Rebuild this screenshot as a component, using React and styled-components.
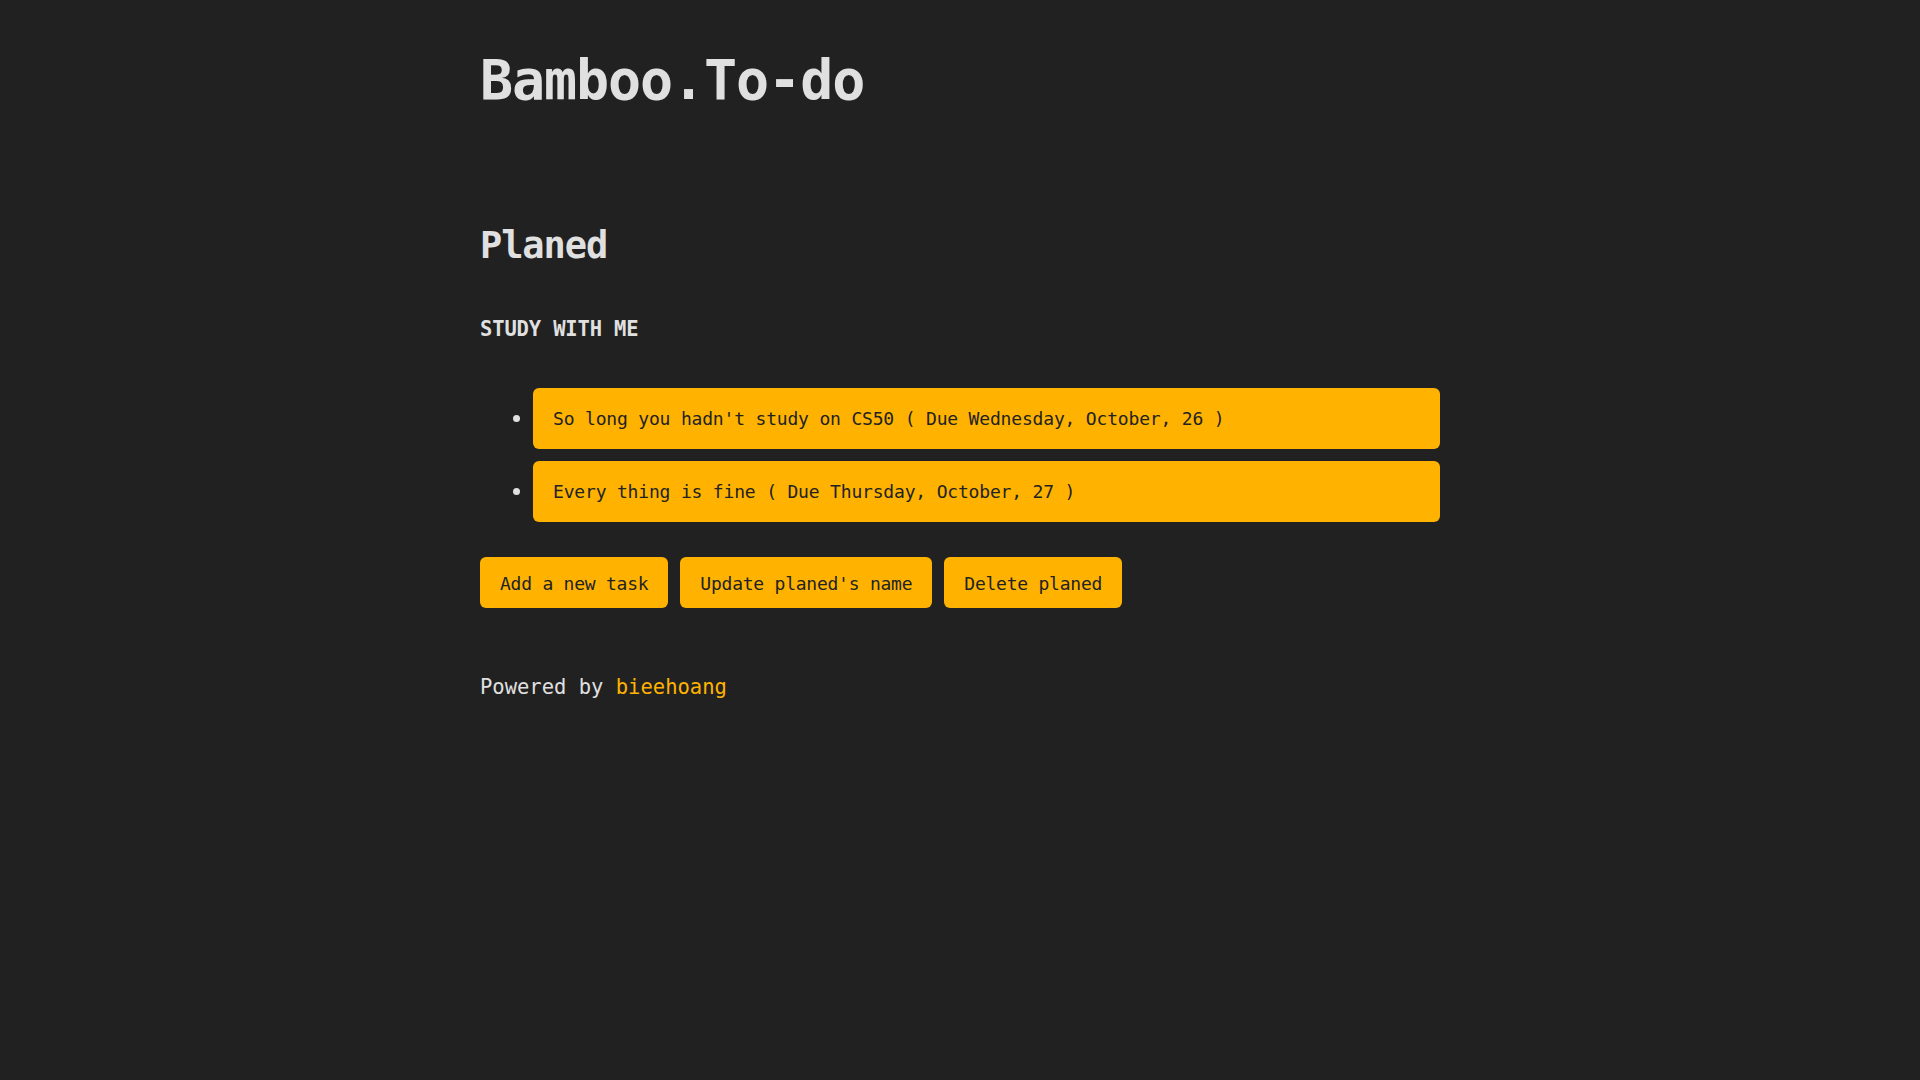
import styled, { createGlobalStyle } from "styled-components";

const GlobalStyle = createGlobalStyle`
  html, body {
    margin: 0;
    padding: 0;
    background: #212121;
    min-height: 100%;
  }
  body {
    font-family: "DejaVu Sans Mono", "Liberation Mono", monospace;
    color: #e0e0e0;
  }
`;

const tasks = [
  "So long you hadn't study on CS50 ( Due Wednesday, October, 26 )",
  "Every thing is fine ( Due Thursday, October, 27 )",
];

const actions = ["Add a new task", "Update planed's name", "Delete planed"];

export default function App() {
  return (
    <>
      <GlobalStyle />
      <Page>
        <Title>Bamboo.To-do</Title>
        <Section>
          <PlanedHeading>Planed</PlanedHeading>
          <PlanName>STUDY WITH ME</PlanName>
          <TaskList>
            {tasks.map((t) => (
              <TaskItem key={t}>
                <TaskCard>{t}</TaskCard>
              </TaskItem>
            ))}
          </TaskList>
          <Actions>
            {actions.map((a) => (
              <Button key={a}>{a}</Button>
            ))}
          </Actions>
        </Section>
        <Footer>
          Powered by <a href="#">bieehoang</a>
        </Footer>
      </Page>
    </>
  );
}

const Page = styled.div`
  max-width: 960px;
  margin: 0 auto;
  padding-top: 47px;
  min-height: 100vh;
  box-sizing: border-box;
`;

const Title = styled.h1`
  margin: 0;
  font-size: 55px;
  line-height: 66px;
  font-weight: 700;
  letter-spacing: -1.1px;
  color: #e0e0e0;
`;

const Section = styled.section`
  margin-top: 111px;
`;

const PlanedHeading = styled.h2`
  margin: 0;
  font-size: 37px;
  line-height: 44px;
  font-weight: 700;
  letter-spacing: -1.1px;
  color: #e0e0e0;
`;

const PlanName = styled.h3`
  margin: 49px 0 0;
  font-size: 20.5px;
  line-height: 24px;
  font-weight: 700;
  letter-spacing: -0.15px;
  color: #e0e0e0;
`;

const TaskList = styled.ul`
  list-style: none;
  margin: 47px 0 0;
  padding: 0;
  display: flex;
  flex-direction: column;
  gap: 12px;
`;

const TaskItem = styled.li`
  display: flex;
  align-items: center;
  &::before {
    content: "";
    flex: none;
    width: 7px;
    height: 7px;
    border-radius: 50%;
    background: #e0e0e0;
    margin-left: 33px;
    margin-right: 13px;
  }
`;

const TaskCard = styled.div`
  flex: 1;
  background: #ffb300;
  color: #222222;
  border-radius: 6px;
  padding: 21px 20px 20px;
  font-size: 18px;
  line-height: 20px;
  letter-spacing: -0.18px;
`;

const Actions = styled.div`
  display: flex;
  gap: 12px;
  margin-top: 35px;
`;

const Button = styled.button`
  font-family: inherit;
  background: #ffb300;
  color: #222222;
  border: none;
  border-radius: 6px;
  padding: 16px 20px 14px;
  font-size: 18px;
  line-height: 21px;
  letter-spacing: -0.24px;
  cursor: pointer;
`;

const Footer = styled.p`
  margin: 67px 0 0;
  font-size: 20.5px;
  line-height: 24px;
  color: #e0e0e0;
  a {
    color: #ffb300;
    text-decoration: none;
  }
`;
